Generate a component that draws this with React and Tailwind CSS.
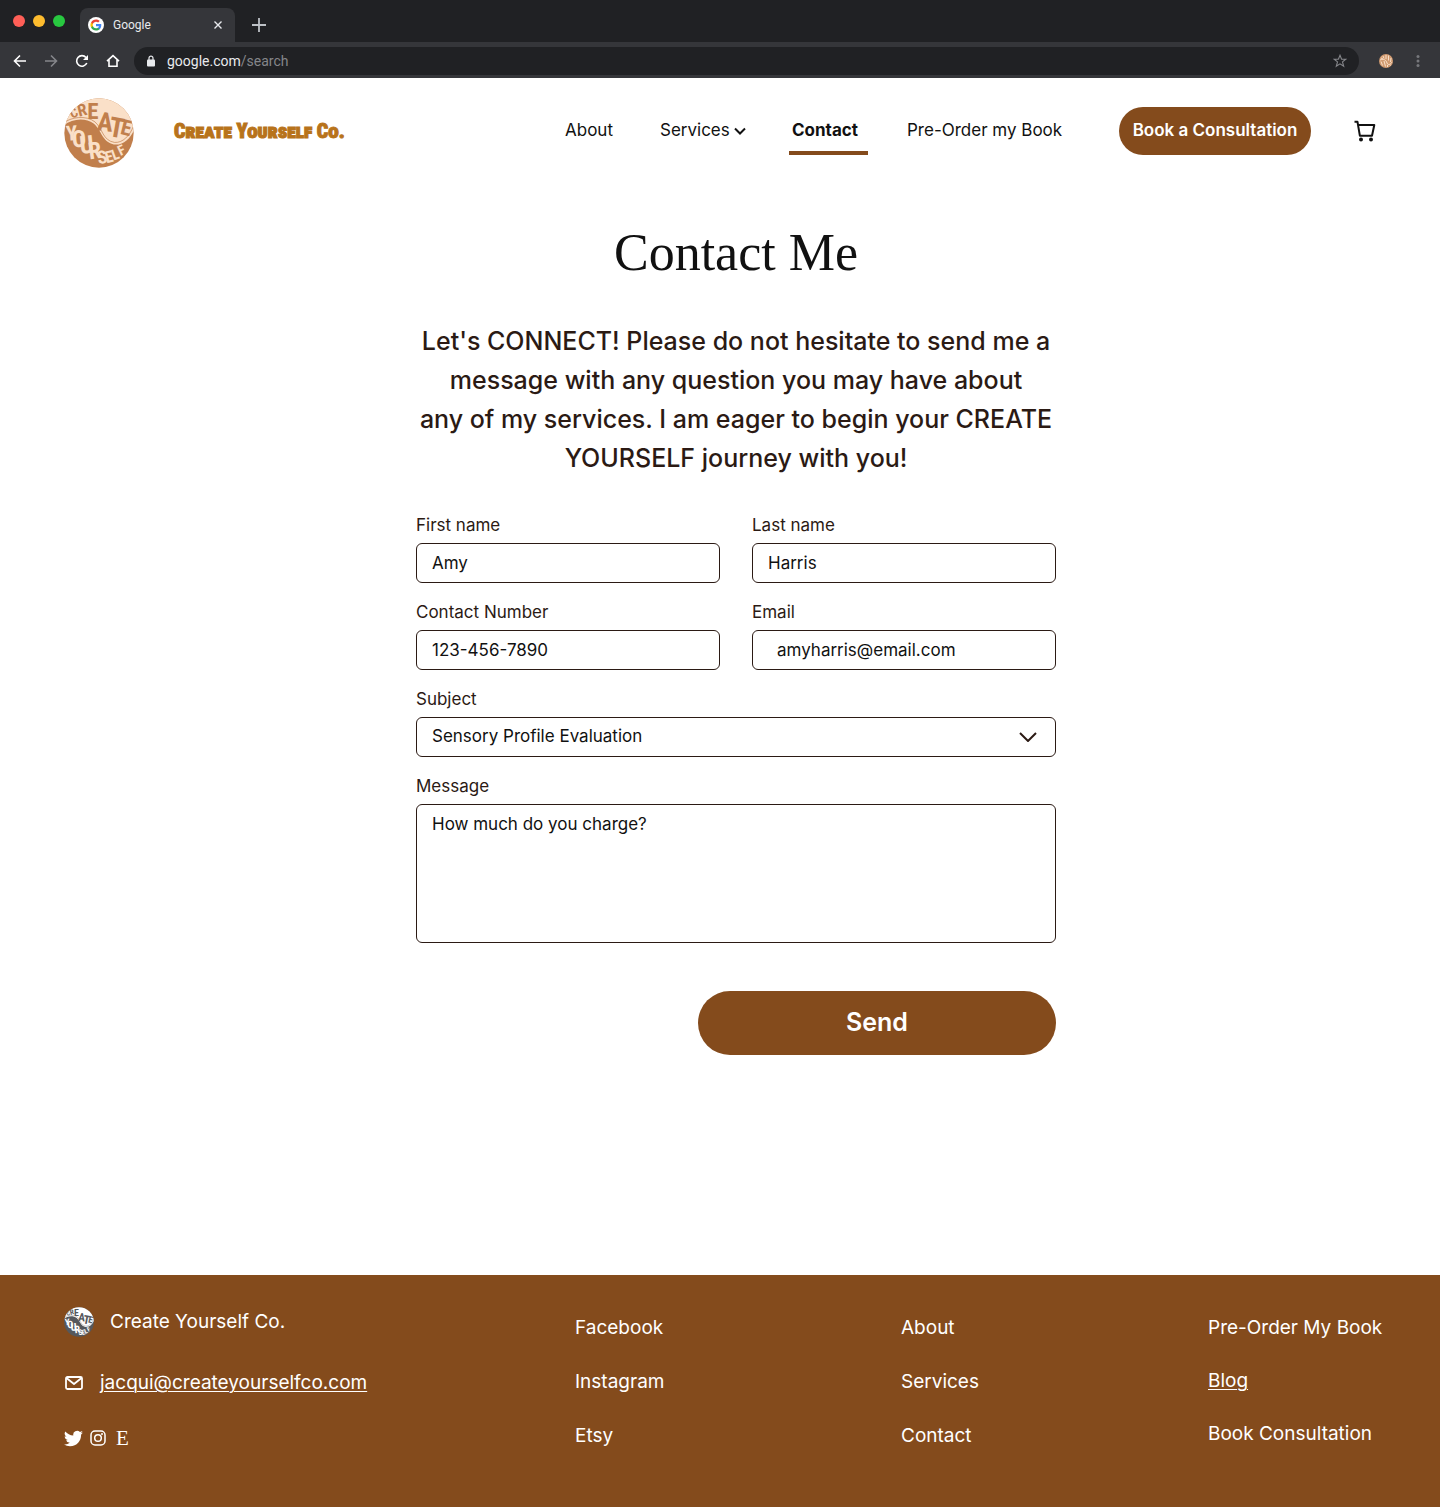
import React from "react";

function GoogleMark() {
  return (
    <svg viewBox="0 0 48 48" className="h-3 w-3" aria-hidden="true">
      <path fill="#4285F4" d="M45.1 24.5c0-1.6-.1-3.1-.4-4.5H24v8.5h11.800c-.5 2.800-2.100 5.100-4.400 6.700v5.500h7.100c4.200-3.800 6.600-9.500 6.600-16.200z" />
      <path fill="#34A853" d="M24 46c5.900 0 10.900-2 14.600-5.300l-7.100-5.500c-2 1.300-4.500 2.100-7.500 2.100-5.700 0-10.600-3.900-12.300-9.100H4.300v5.700C8 41.100 15.400 46 24 46z" />
      <path fill="#FBBC05" d="M11.700 28.200a13.200 13.200 0 0 1 0-8.400v-5.700H4.300a22 22 0 0 0 0 19.800z" />
      <path fill="#EA4335" d="M24 10.700c3.200 0 6.100 1.100 8.400 3.300l6.300-6.300C34.900 4.200 29.900 2 24 2 15.400 2 8 6.900 4.300 14.100l7.400 5.700c1.700-5.200 6.600-9.100 12.300-9.100z" />
    </svg>
  );
}

const upperLetters = [
  { ch: "C", x: 35, y: 57, size: 40, turn: -26 },
  { ch: "R", x: 58, y: 52, size: 50, turn: -14 },
  { ch: "E", x: 86, y: 62, size: 68, turn: 0 },
  { ch: "A", x: 120, y: 98, size: 78, turn: 6 },
  { ch: "T", x: 152, y: 116, size: 82, turn: 10 },
  { ch: "E", x: 180, y: 110, size: 64, turn: 14 },
];

const lowerLetters = [
  { ch: "Y", x: 24, y: 126, size: 62, turn: -4 },
  { ch: "O", x: 46, y: 146, size: 70, turn: -4 },
  { ch: "U", x: 70, y: 164, size: 74, turn: -6 },
  { ch: "R", x: 95, y: 180, size: 70, turn: -8 },
  { ch: "S", x: 117, y: 194, size: 54, turn: -10 },
  { ch: "E", x: 138, y: 191, size: 48, turn: -14 },
  { ch: "L", x: 158, y: 182, size: 44, turn: -20 },
  { ch: "F", x: 177, y: 168, size: 42, turn: -26 },
];

const emblemFont = "'Roboto Condensed','DejaVu Sans Condensed',sans-serif";

function Letters({ items, color }) {
  return (
    <g fontFamily={emblemFont} fontWeight="700" textAnchor="middle" fill={color}>
      {items.map((l) => (
        <text key={l.ch + l.x} x={l.x} y={l.y} fontSize={l.size} transform={`rotate(${l.turn} ${l.x} ${l.y})`}>{l.ch}</text>
      ))}
    </g>
  );
}

function Emblem({ light, dark, id, className }) {
  return (
    <svg viewBox="0 0 208 208" className={className} role="img" aria-label="Create Yourself emblem">
      <defs>
        <clipPath id={id}>
          <circle cx="104" cy="104" r="103" />
        </clipPath>
      </defs>
      <g clipPath={"url(#" + id + ")"}>
        <rect width="208" height="208" fill={dark} />
        <path d="M-4 84C20 62 62 56 88 76C112 96 112 130 148 138C178 142 200 118 212 86V-4H-4Z" fill={light} />
        <path d="M-4 76C20 56 66 50 92 71C116 92 114 126 150 132C174 134 196 112 206 84" fill="none" stroke={dark} strokeWidth="2" />
        <Letters items={upperLetters} color={dark} />
        <Letters items={lowerLetters} color={light} />
      </g>
    </svg>
  );
}

function ToolIcon({ children, label, className }) {
  return (
    <button type="button" aria-label={label} className={"flex h-4 w-4 items-center justify-center " + className}>
      <svg viewBox="0 0 16 16" className="h-4 w-4" fill="none" stroke="currentColor" strokeWidth="1.6">
        {children}
      </svg>
    </button>
  );
}

function BrowserBar() {
  return (
    <div className="font-['Roboto',sans-serif]">
      <div className="flex h-[42px] items-end bg-[#202124]">
        <div className="flex h-full w-20 items-center gap-2 pl-[13px]">
          <span className="h-3 w-3 rounded-full bg-[#ff5f57]" />
          <span className="h-3 w-3 rounded-full bg-[#febc2e]" />
          <span className="h-3 w-3 rounded-full bg-[#28c840]" />
        </div>
        <div className="flex h-[34px] w-[155px] items-center rounded-t-lg bg-[#35363a] pl-2 pr-3">
          <span className="flex h-4 w-4 items-center justify-center rounded-full bg-white"><GoogleMark /></span>
          <span className="ml-[9px] text-xs text-[#e8eaed]">Google</span>
          <button type="button" aria-label="Close tab" className="ml-auto text-[#e8eaed]">
            <svg viewBox="0 0 10 10" className="h-[10px] w-[10px]" stroke="currentColor" strokeWidth="1.400"><path d="M1.500 1.500l7 7M8.500 1.500l-7 7" /></svg>
          </button>
        </div>
        <button type="button" aria-label="New tab" className="mb-[10px] ml-[17px] text-[#bdc1c6]">
          <svg viewBox="0 0 14 14" className="h-[14px] w-[14px]" stroke="currentColor" strokeWidth="1.800"><path d="M7 0v14M0 7h14" /></svg>
        </button>
      </div>
      <div className="flex h-9 items-center bg-[#35363a] pl-3 pr-[14px] pt-[2px]">
        <ToolIcon label="Back" className="text-white"><path d="M14 8H3M8 2.500L2.500 8 8 13.500" /></ToolIcon>
        <ToolIcon label="Forward" className="ml-[15px] text-[#85868a]"><path d="M2 8h11M8 2.500L13.500 8 8 13.500" /></ToolIcon>
        <ToolIcon label="Reload" className="ml-[15px] text-white"><path d="M12.800 10A5.300 5.300 0 1 1 12 4.500" /><path d="M14 2v5H9z" fill="currentColor" stroke="none" /></ToolIcon>
        <ToolIcon label="Home" className="ml-[15px] text-white"><path d="M2 8.200L8 2.700l6 5.500M4 7v6.300h8V7" /></ToolIcon>
        <div className="ml-[13px] flex h-7 flex-1 items-center rounded-full bg-[#202124] px-3">
          <svg viewBox="0 0 10 12" className="h-3 w-[10px] text-[#e8eaed]" aria-hidden="true">
            <rect x="1" y="4.500" width="8" height="7" rx="1" fill="currentColor" />
            <path d="M3 5V3.200a2 2 0 0 1 4 0V5" fill="none" stroke="currentColor" strokeWidth="1.200" />
          </svg>
          <span className="ml-[11px] flex text-sm leading-5 text-[#e8eaed]">
            <span>google.com</span>
            <span className="text-[#85868a]">/search</span>
          </span>
          <button type="button" aria-label="Bookmark" className="ml-auto text-[#85868a]">
            <svg viewBox="0 0 14 14" className="h-[14px] w-[14px]" fill="none" stroke="currentColor" strokeWidth="1.100"><path d="M7 1.300l1.600 4h4.200L9.500 7.900l1.200 4.400L7 9.800l-3.700 2.500 1.200-4.400L1.200 5.300h4.200z" /></svg>
          </button>
        </div>
        <svg viewBox="0 0 14 14" className="ml-5 h-[14px] w-[14px]" role="img" aria-label="Profile">
          <circle cx="7" cy="7" r="7" fill="#d09a70" />
          <path d="M2 4l2 1M4 2l1 2.500M7 1v4M9.500 1.500v5M12 4l-.5 4M1 6c4-1.500 6 0 7 3s4 1 5-1M2 7.500l1.500 4M5 7l1.500 5.500M8.500 11v2M11 10.500l.5 1" fill="none" stroke="#fae0c8" strokeWidth="1" />
        </svg>
        <button type="button" aria-label="Menu" className="ml-[17px] text-[#77787c]">
          <svg viewBox="0 0 16 14" className="h-[14px] w-4" fill="currentColor"><circle cx="8" cy="2.500" r="1.500" /><circle cx="8" cy="7" r="1.500" /><circle cx="8" cy="11.500" r="1.500" /></svg>
        </button>
      </div>
    </div>
  );
}

function Header() {
  return (
    <header className="flex h-[106px] items-center whitespace-nowrap px-16 text-[17px] text-[#111111]">
      <a href="#home" className="flex items-center gap-10">
        <Emblem id="brand" light="#fae0c8" dark="#c17f4c" className="mt-1 h-[70px] w-[70px]" />
        <span className="font-['Roboto_Condensed','Lato',sans-serif] text-xl font-black text-[#b8731b] [-webkit-text-stroke:1px_#b8731b] [font-variant-caps:small-caps]">Create Yourself Co.</span>
      </a>
      <nav className="ml-auto flex items-center">
        <a href="#about" className="w-12">About</a>
        <a href="#services" className="ml-[47px] flex w-[86px] items-center justify-between">
          Services
          <svg viewBox="0 0 12 8" className="h-2 w-3" fill="none" stroke="currentColor" strokeWidth="2"><path d="M1 1.500l5 5 5-5" /></svg>
        </a>
        <a href="#contact" aria-current="page" className="ml-[43px] mt-1 flex h-[44px] w-[79px] items-center border-b-4 border-[#844b1c] pl-[3px] font-bold">Contact</a>
        <a href="#book" className="ml-[39px] w-[152px]">Pre-Order my Book</a>
      </nav>
      <button type="button" className="ml-[60px] h-12 w-48 rounded-full bg-[#844b1c] font-semibold text-white">Book a Consultation</button>
      <button type="button" aria-label="Cart" className="ml-[43px]">
        <svg viewBox="0 0 22 22" className="h-[22px] w-[22px]" fill="none" stroke="currentColor" strokeWidth="2" strokeLinejoin="round">
          <path d="M0.500 1.800h3l2.400 14H18L20.300 5H4.200" />
          <circle cx="7" cy="19.500" r="2" fill="currentColor" stroke="none" />
          <circle cx="17" cy="19.500" r="2" fill="currentColor" stroke="none" />
        </svg>
      </button>
    </header>
  );
}

const boxStyle = "block h-10 w-full rounded-md border border-[#2b1a14] bg-white text-[#111111] outline-none";

function Field({ id, label, value, type, pad }) {
  return (
    <div>
      <label htmlFor={id} className="mb-[5px] block leading-[26px]">{label}</label>
      <input id={id} type={type} defaultValue={value} className={boxStyle + " " + pad} />
    </div>
  );
}

function ContactForm() {
  return (
    <form className="mt-[34px] w-full text-[17px] text-[#2b1a14]">
      <div className="grid grid-cols-2 gap-x-8 gap-y-4">
        <Field id="first" label="First name" value="Amy" type="text" pad="px-[15px]" />
        <Field id="last" label="Last name" value="Harris" type="text" pad="px-[15px]" />
        <Field id="phone" label="Contact Number" value="123-456-7890" type="tel" pad="px-[15px]" />
        <Field id="email" label="Email" value="amyharris@email.com" type="email" pad="px-6" />
        <div className="col-span-2">
          <label htmlFor="subject" className="mb-[5px] block leading-[26px]">Subject</label>
          <div className="relative">
            <select id="subject" className={boxStyle + " appearance-none px-[15px]"}>
              <option>Sensory Profile Evaluation</option>
            </select>
            <svg viewBox="0 0 18 10" className="pointer-events-none absolute right-[19px] top-[15px] h-[10px] w-[18px]" fill="none" stroke="currentColor" strokeWidth="2"><path d="M1 1l8 8 8-8" /></svg>
          </div>
        </div>
        <div className="col-span-2">
          <label htmlFor="message" className="mb-[5px] block leading-[26px]">Message</label>
          <textarea id="message" defaultValue="How much do you charge?" className="block h-[139px] w-full resize-none rounded-md border border-[#2b1a14] px-[15px] py-[6px] leading-[26px] text-[#111111] outline-none" />
        </div>
      </div>
      <button type="submit" className="ml-auto mt-12 block h-16 w-[358px] rounded-full bg-[#844b1c] text-[25px] font-semibold text-white">Send</button>
    </form>
  );
}

function Footer() {
  return (
    <footer className="grid h-[232px] grid-cols-[minmax(0,511fr)_minmax(0,326fr)_minmax(0,307fr)_minmax(0,168fr)] items-start whitespace-nowrap bg-[#844b1c] px-16 text-[19px] leading-[30px] text-white">
      <div className="pt-8">
        <div className="flex items-center gap-4">
          <Emblem id="foot" light="#ffffff" dark="#55585c" className="h-[30px] w-[30px]" />
          <span>Create Yourself Co.</span>
        </div>
        <div className="mt-[31px] flex items-center gap-4">
          <svg viewBox="0 0 20 20" className="h-5 w-5" fill="none" stroke="currentColor" strokeWidth="1.800" strokeLinejoin="round" aria-hidden="true"><rect x="2" y="4" width="16" height="12" rx="1.500" /><path d="M2.500 5l7.500 6 7.500-6" /></svg>
          <a href="mailto:jacqui@createyourselfco.com" className="underline decoration-1 underline-offset-2">jacqui@createyourselfco.com</a>
        </div>
        <div className="mt-[30px] flex items-center gap-[6px]">
          <a href="#twitter" aria-label="Twitter">
            <svg viewBox="0 0 24 24" className="h-[19px] w-[19px]" fill="currentColor"><path d="M23.950 4.570a10 10 0 0 1-2.820.770 4.960 4.960 0 0 0 2.160-2.720c-.950.550-2 .950-3.130 1.180a4.920 4.920 0 0 0-8.380 4.480C7.690 8.100 4.070 6.130 1.640 3.160a4.920 4.920 0 0 0 1.520 6.570 4.900 4.900 0 0 1-2.230-.610v.060a4.920 4.920 0 0 0 3.950 4.830 5 5 0 0 1-2.210.080 4.940 4.940 0 0 0 4.600 3.420A9.870 9.870 0 0 1 0 19.540a13.990 13.990 0 0 0 7.550 2.210c9.050 0 14-7.500 14-13.980 0-.210 0-.420-.020-.630a9.940 9.940 0 0 0 2.420-2.570z" /></svg>
          </a>
          <a href="#instagram" aria-label="Instagram" className="ml-px">
            <svg viewBox="0 0 16 16" className="h-4 w-4" fill="none" stroke="currentColor" strokeWidth="1.500"><rect x="1" y="1" width="14" height="14" rx="4" /><circle cx="8" cy="8" r="3.300" /><circle cx="12" cy="4" r="1" fill="currentColor" stroke="none" /></svg>
          </a>
          <a href="#etsy" aria-label="Etsy" className="ml-1 font-['Liberation_Serif',serif] text-[21px] leading-5">E</a>
        </div>
      </div>
      <div className="flex flex-col items-start gap-6 pt-[38px]">
        <a href="#facebook">Facebook</a>
        <a href="#instagram">Instagram</a>
        <a href="#etsy">Etsy</a>
      </div>
      <div className="flex flex-col items-start gap-6 pt-[38px]">
        <a href="#about">About</a>
        <a href="#services">Services</a>
        <a href="#contact">Contact</a>
      </div>
      <div className="flex flex-col items-start gap-[23px] pt-[38px]">
        <a href="#book">Pre-Order My Book</a>
        <a href="#blog" className="underline decoration-1 underline-offset-2">Blog</a>
        <a href="#consultation">Book Consultation</a>
      </div>
    </footer>
  );
}

export default function App() {
  return (
    <div className="bg-white font-['Inter',sans-serif]">
      <BrowserBar />
      <Header />
      <main className="flex flex-col items-center pb-[220px] pl-8 pt-[35px]">
        <h1 className="font-['Liberation_Serif',serif] text-[52px] leading-[68px] text-[#111111]">Contact Me</h1>
        <div className="w-full max-w-[640px]">
          <p className="mt-[35px] text-center text-[25px] font-medium leading-[39px] text-[#2b1a14]">
            Let's CONNECT! Please do not hesitate to send me a message with any question you may have about
            <br />
            any of my services. I am eager to begin your CREATE YOURSELF journey with you!
          </p>
          <ContactForm />
        </div>
      </main>
      <Footer />
    </div>
  );
}
